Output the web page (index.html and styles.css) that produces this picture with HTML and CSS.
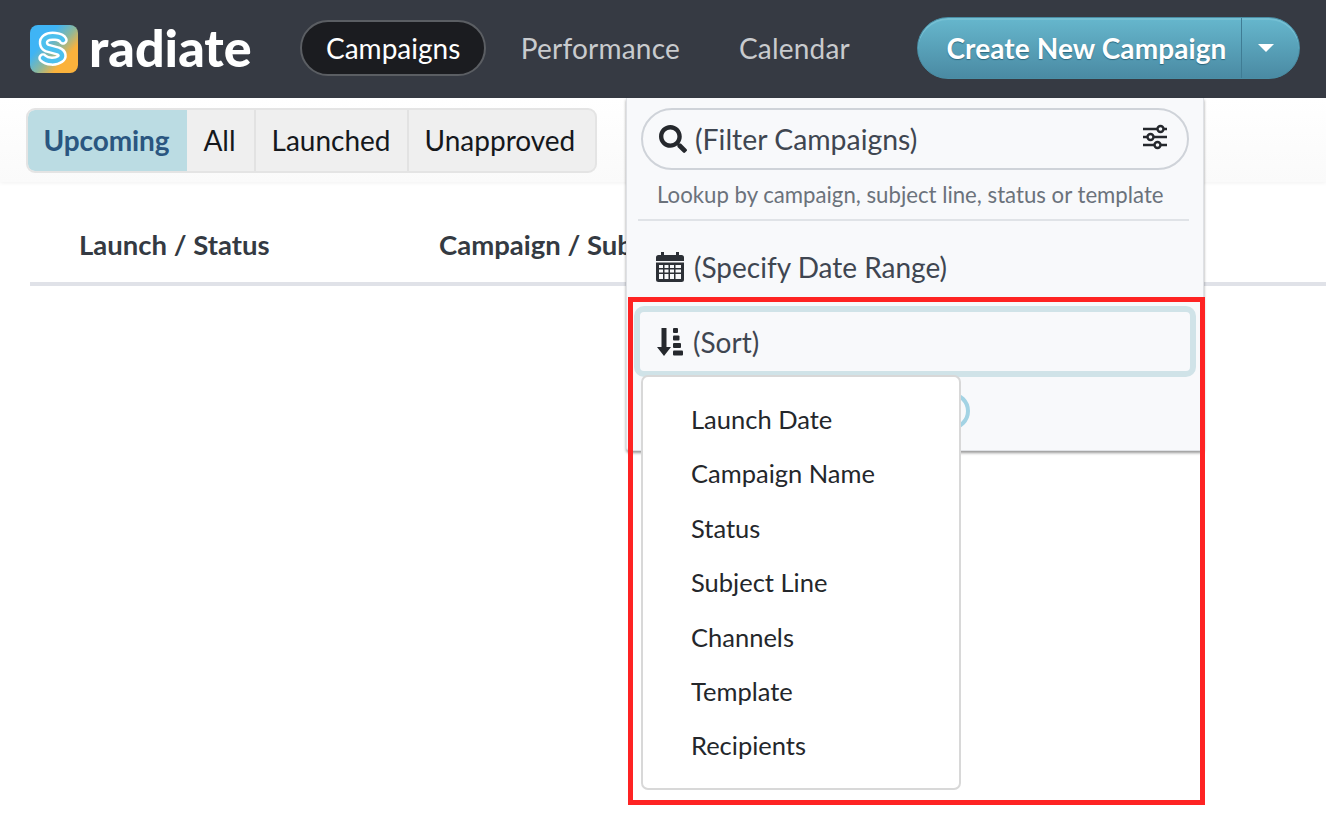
FILE: index.html
```html
<!DOCTYPE html>
<html lang="en">
<head>
<meta charset="utf-8">
<title>Radiate Campaigns</title>
<link rel="stylesheet" href="styles.css">
</head>
<body>
<header class="topbar">
  <div class="brand">
    <svg class="brand-icon" viewBox="0 0 48 48" aria-hidden="true">
      <defs>
        <linearGradient id="lg" x1="0.1" y1="0.15" x2="0.9" y2="0.85">
          <stop offset="0.25" stop-color="#3fb4f5"/>
          <stop offset="0.55" stop-color="#8fb89a"/>
          <stop offset="0.8" stop-color="#fbb23c"/>
        </linearGradient>
      </defs>
      <rect width="48" height="48" rx="8" fill="url(#lg)"/>
      <path d="M33 15c-2-4-13-5-17-2-4 3-3 8 1 10l11 3c5 2 5 6 2 8-4 3-13 3-17-1" fill="none" stroke="#fff" stroke-width="9.500" stroke-linecap="round" stroke-linejoin="round"/>
      <path d="M33 15c-2-4-13-5-17-2-4 3-3 8 1 10l11 3c5 2 5 6 2 8-4 3-13 3-17-1" fill="none" stroke="#4cc0ee" stroke-width="4.500" stroke-linecap="round" stroke-linejoin="round"/>
    </svg>
    <span class="brand-name">radiate</span>
  </div>
  <nav class="nav">
    <a class="nav-item nav-active">Campaigns</a>
    <a class="nav-item">Performance</a>
    <a class="nav-item">Calendar</a>
  </nav>
  <div class="create">
    <span class="create-label">Create New Campaign</span>
    <span class="create-caret"><i class="caret"></i></span>
  </div>
</header>

<section class="subbar">
  <div class="tabs">
    <span class="tab tab-active">Upcoming</span>
    <span class="tab tab-all">All</span>
    <span class="tab">Launched</span>
    <span class="tab">Unapproved</span>
  </div>
</section>

<section class="table-head">
  <div class="col col-launch">Launch / Status</div>
  <div class="col col-campaign">Campaign / Subject</div>
</section>

<aside class="panel">
  <div class="search">
    <svg class="search-icon" viewBox="0 0 512 512" aria-hidden="true"><path fill="#25282d" d="M505 442.700L405.300 343c-4.500-4.500-10.600-7-17-7H372c27.600-35.300 44-79.700 44-128C416 93.100 322.900 0 208 0S0 93.100 0 208s93.100 208 208 208c48.300 0 92.700-16.400 128-44v16.300c0 6.400 2.500 12.500 7 17l99.700 99.700c9.400 9.400 24.600 9.400 33.900 0l28.300-28.300c9.400-9.400 9.400-24.600.1-34zM208 336c-70.700 0-128-57.200-128-128 0-70.700 57.200-128 128-128 70.700 0 128 57.200 128 128 0 70.700-57.200 128-128 128z"/></svg>
    <span class="search-text">(Filter Campaigns)</span>
    <svg class="sliders" viewBox="0 0 26 26" aria-hidden="true">
      <g fill="none" stroke="#25282d" stroke-width="2.400">
        <path d="M1 5h14M22 5h3M1 13h4M12 13h13M1 21h11M19 21h6"/>
        <circle cx="18.500" cy="5" r="3"/>
        <circle cx="8.500" cy="13" r="3"/>
        <circle cx="15.500" cy="21" r="3"/>
      </g>
    </svg>
  </div>
  <p class="hint">Lookup by campaign, subject line, status or template</p>
  <div class="divider"></div>
  <div class="row row-date">
    <svg class="cal" viewBox="0 0 28 30" aria-hidden="true">
      <path fill="#2c3036" fill-rule="evenodd" d="M5 0h3v3h12V0h3v3h2.500A2.500 2.500 0 0 1 28 5.500V9H0V5.500A2.500 2.500 0 0 1 2.500 3H5zM0 10.500h28v17a2.500 2.500 0 0 1-2.500 2.500h-23A2.500 2.500 0 0 1 0 27.500zM3 13v3h4v-3zm5.500 0v3h4v-3zm5.500 0v3h4v-3zm5.500 0v3h5.500v-3zM3 17.500v3h4v-3zm5.500 0v3h4v-3zm5.500 0v3h4v-3zm5.500 0v3h5.500v-3zM3 22v5h4v-5zm5.500 0v5h4v-5zm5.500 0v5h4v-5zm5.500 0v5h5.500v-5z"/>
    </svg>
    <span>(Specify Date Range)</span>
  </div>
  <div class="row row-sort">
    <svg class="sort-icon" viewBox="0 0 26 28" aria-hidden="true">
      <path fill="#25282d" d="M4.500 0h5v19H14l-7 9-7-9h4.500z"/>
      <rect x="16" y="0" width="5" height="5" rx="1" fill="#25282d"/>
      <rect x="16" y="7.500" width="6.500" height="5" rx="1" fill="#25282d"/>
      <rect x="16" y="15" width="8" height="5" rx="1" fill="#25282d"/>
      <rect x="16" y="22.500" width="10" height="5" rx="1" fill="#25282d"/>
    </svg>
    <span>(Sort)</span>
  </div>
  <span class="ring"></span>
</aside>

<ul class="sort-menu">
  <li>Launch Date</li>
  <li>Campaign Name</li>
  <li>Status</li>
  <li>Subject Line</li>
  <li>Channels</li>
  <li>Template</li>
  <li>Recipients</li>
</ul>

<div class="callout"></div>
</body>
</html>
```
FILE: styles.css
```css
* { box-sizing: border-box; }
html, body { margin: 0; padding: 0; }
body {
  width: 1326px;
  height: 816px;
  overflow: hidden;
  position: relative;
  background: #fff;
  font-family: "Lato", "Liberation Sans", sans-serif;
  color: #2c3036;
}

.topbar {
  height: 98px;
  background: #363a43;
  display: flex;
  align-items: center;
  padding-left: 30px;
}
.brand { display: flex; align-items: center; gap: 11px; width: 270px; }
.brand-icon { width: 48px; height: 48px; display: block; }
.brand-name {
  font-size: 52px;
  font-weight: 900;
  color: #fff;
  line-height: 48px;
  margin-top: -4px;
}
.nav { display: flex; align-items: center; gap: 0; margin-top: -2px; }
.nav-item {
  font-size: 28px;
  letter-spacing: .2px;
  color: #c9cbce;
  height: 56px;
  line-height: 52px;
  padding: 0 27.500px;
  border: 2px solid transparent;
  border-radius: 28px;
}
.nav-active {
  color: #fff;
  letter-spacing: 0;
  background: #1b1c20;
  border-color: #5b5e63;
  padding: 0 24px;
  margin-right: 5px;
}
.create {
  margin-left: 38px;
  width: 383px;
  height: 62px;
  margin-top: -3px;
  display: flex;
  border-radius: 31px;
  border: 1px solid #4a8ea5;
  background: linear-gradient(#66b7cd, #4a8aa3);
  box-shadow: inset 0 2px 0 #75bfd3;
  color: #fff;
  font-size: 28px;
  font-weight: 700;
  letter-spacing: .1px;
  line-height: 60px;
  text-shadow: 0 1px 1px rgba(20, 70, 90, .6);
}
.create-label { width: 324px; padding-left: 28px; white-space: nowrap; border-right: 1px solid #3f7c94; }
.create-caret { flex: 1; display: flex; align-items: center; justify-content: center; padding-right: 9px; }
.caret {
  width: 0; height: 0;
  border-left: 8px solid transparent;
  border-right: 8px solid transparent;
  border-top: 8px solid #fff;
}

.subbar {
  height: 84px;
  padding: 10px 0 0 26px;
  background: linear-gradient(#fff, #fafafa);
  box-shadow: 0 1px 4px rgba(0, 0, 0, .06);
}
.tabs {
  display: inline-flex;
  height: 65px;
  border: 2px solid #e4e4e4;
  border-radius: 9px;
  background: #efefef;
  overflow: hidden;
}
.tab {
  font-size: 28px;
  line-height: 60px;
  color: #15181c;
  padding: 0 16px;
  border-left: 2px solid #e2e2e2;
}
.tab:last-child { padding-right: 20px; }
.tab-active {
  background: #bbdce3;
  color: #2a5680;
  font-weight: 700;
  letter-spacing: -.1px;
  padding: 0 18px 0 15.500px;
  border-left: 0;
  border-radius: 7px 0 0 7px;
}
.tab-all { border-left: 0; padding-right: 18px; }

.table-head {
  display: flex;
  margin: 0 0 0 30px;
  height: 104px;
  padding: 43px 0 0 49px;
  border-bottom: 4px solid #e0e2e8;
  font-size: 27.500px;
  font-weight: 700;
  color: #343a42;
  white-space: nowrap;
}
.col { line-height: 40px; }
.col-launch { width: 360px; }

.panel {
  position: absolute;
  left: 626px;
  top: 98px;
  width: 578px;
  height: 353px;
  background: #f8f9fb;
  border: 1px solid #dfe1e5;
  border-top: 0;
  border-radius: 0 0 4px 4px;
  box-shadow: 0 2px 3px rgba(0, 0, 0, .4);
  padding: 10px 14px 0 14px;
}
.search {
  height: 62px;
  border: 2px solid #cfd3d9;
  border-radius: 31px;
  display: flex;
  align-items: center;
  padding: 0 19px 0 16px;
}
.search-icon { width: 28px; height: 28px; margin-right: 8px; }
.search-text { font-size: 28.400px; color: #3f4651; flex: 1; margin-top: -1px; }
.sliders { width: 26px; height: 26px; margin-top: -4px; }
.hint {
  margin: 11px 0 0 16px;
  font-size: 22.200px;
  line-height: 28px;
  color: #6b727b;
  white-space: nowrap;
}
.divider { height: 2px; background: #e0e3e7; margin: 10px 0 0 -3px; width: 551px; }
.row {
  display: flex;
  align-items: center;
  font-size: 28px;
  color: #3f4651;
}
.row-date { height: 40px; margin-top: 26px; padding-left: 15px; gap: 10px; }
.cal { width: 28px; height: 30px; }
.row-sort {
  position: absolute;
  left: 7px;
  top: 208px;
  width: 562px;
  height: 71px;
  border: 6px solid #d0e3e8;
  border-radius: 10px;
  padding-left: 17px;
  gap: 10px;
}
.sort-icon { width: 26px; height: 28px; }
.ring {
  position: absolute;
  left: 305px;
  top: 294px;
  width: 38px;
  height: 38px;
  border: 4px solid #a3d3e4;
  border-radius: 50%;
}

.sort-menu {
  position: absolute;
  left: 641px;
  top: 375px;
  width: 320px;
  height: 415px;
  margin: 0;
  padding: 15px 0 0 48px;
  list-style: none;
  background: #fff;
  border: 2px solid #d8d8d8;
  border-radius: 7px;
  font-size: 25.500px;
  color: #24272b;
}
.sort-menu li { height: 54.400px; line-height: 54.400px; }

.callout {
  position: absolute;
  left: 628px;
  top: 297px;
  width: 577px;
  height: 508px;
  border: 5px solid #fe2323;
  pointer-events: none;
}
```
